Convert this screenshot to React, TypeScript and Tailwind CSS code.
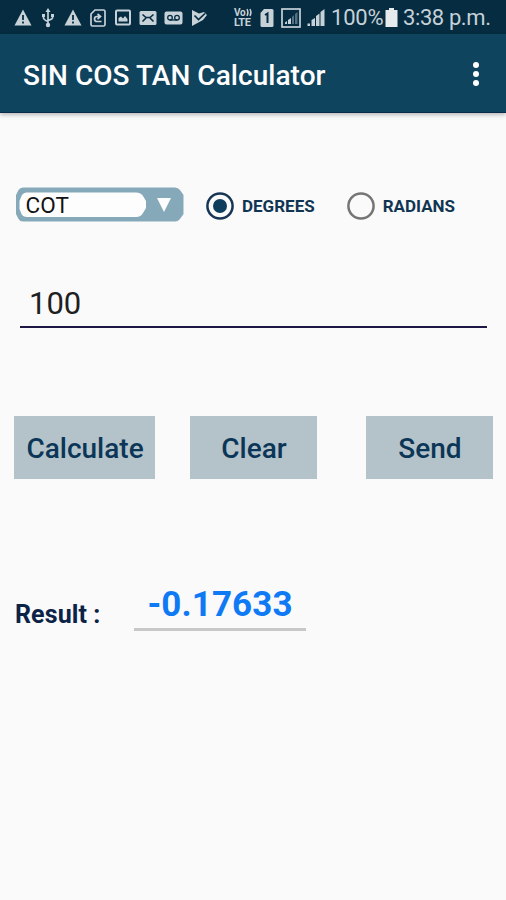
import React, { useState } from "react";

const ANGLE_UNITS = ["DEGREES", "RADIANS"];

export default function App() {
  const [unit, setUnit] = useState("DEGREES");
  const [value, setValue] = useState("100");

  return (
    <div className="flex h-[900px] w-[506px] flex-col overflow-hidden bg-[#fafafa] font-['Roboto',sans-serif]">
      <StatusBar />
      <Header />

      <main className="flex flex-1 flex-col pt-[74px]">
        {/* Function select and angle unit */}
        <div className="flex h-[36px] items-center pl-[15px]">
          <FunctionSelect />
          <div className="ml-[22px] flex gap-[32px]">
            {ANGLE_UNITS.map((name) => (
              <UnitRadio key={name} label={name} checked={unit === name} onClick={() => setUnit(name)} />
            ))}
          </div>
        </div>

        <div className="ml-[20px] mr-[19px] mt-[56px] flex h-[49px] flex-col justify-end border-b-[2px] border-[#1d1745]">
          <input
            value={value}
            onChange={(e) => setValue(e.target.value)}
            className="h-[48px] w-full bg-transparent pl-[9px] pt-[2px] text-[31px] text-[#1f1f1f] outline-none"
          />
        </div>

        <div className="mt-[88px] flex pl-[14px]">
          <ActionButton className="w-[141px]">Calculate</ActionButton>
          <ActionButton className="ml-[35px] w-[127px]">Clear</ActionButton>
          <ActionButton className="ml-[49px] w-[127px]">Send</ActionButton>
        </div>

        <div className="mt-[101px] flex pl-[15px]">
          <span className="w-[119px] pt-[20px] text-[25px] font-bold leading-[30px] tracking-[0.1px] text-[#0b2347]">
            Result :
          </span>
          <div className="h-[51px] w-[172px] border-b-[3px] border-[#c8c8c8] text-center text-[35px] font-bold leading-[49px] tracking-[0.1px] text-[#107af5]">
            -0.17633
          </div>
        </div>
      </main>
    </div>
  );
}

function Header() {
  return (
    <header className="flex h-[79px] shrink-0 items-center justify-between border-b border-[#0a2c49] bg-[#0f445f] pl-[23px] pr-[27px] pt-[2px] shadow-[0_2px_4px_rgba(0,0,0,0.25)]">
      <h1 className="whitespace-nowrap pt-[3px] text-[28px] font-medium tracking-[0.05px] text-white">
        SIN COS TAN Calculator
      </h1>
      <button className="flex flex-col gap-[3px]" aria-label="More options">
        <span className="h-[6px] w-[6px] rounded-full bg-white" />
        <span className="h-[6px] w-[6px] rounded-full bg-white" />
        <span className="h-[6px] w-[6px] rounded-full bg-white" />
      </button>
    </header>
  );
}

function FunctionSelect() {
  return (
    <svg width="169" height="36" viewBox="0 0 169 36" className="block">
      <path d="M8 .5H160Q163 .5 165 3L168.500 8V27L165 32Q163 34.500 160 34.500H8Q5 34.500 3.500 32L1 27V8L3.500 3Q5 .5 8 .5Z" fill="#86a9b9" />
      <path d="M12 5.500H121Q126 5.500 128 9L131 14V21L128 26Q126 30 121 30H12Q8 30 6.500 27L4.500 22V14L6.500 9Q8 5.500 12 5.500Z" fill="#fdfdfd" />
      <path d="M142 11H156L149 25Z" fill="#fdfdfd" />
      <text x="10.500" y="26" fontSize="22.500" fill="#111" textLength="43.500">COT</text>
    </svg>
  );
}

function UnitRadio({ label, checked, onClick }: { label: string; checked: boolean; onClick: () => void }) {
  return (
    <button onClick={onClick} className="flex items-center gap-[8px] pt-[2px]">
      <svg width="28" height="28" viewBox="0 0 28 28">
        <circle cx="14" cy="14" r="12.600" fill="none" stroke={checked ? "#173655" : "#757575"} strokeWidth="2.500" />
        {checked && <circle cx="14" cy="14" r="7" fill="#0f3e5c" />}
      </svg>
      <span className="pt-[2px] text-[17px] font-bold text-[#103553]">{label}</span>
    </button>
  );
}

function ActionButton({ className, children }: { className: string; children: React.ReactNode }) {
  return (
    <button className={`h-[63px] bg-[#b4c3ca] pl-[1px] pt-[3px] text-[28px] font-medium text-[#0c3657] ${className}`}>
      {children}
    </button>
  );
}

function StatusBar() {
  return (
    <div className="flex h-[34px] shrink-0 items-center bg-[#052c40] pl-[14px] pt-px text-[#c6d1d8]">
      <WarningIcon />
      <UsbIcon />
      <WarningIcon />
      <svg width="18" height="20" viewBox="0 0 18 20" className="ml-[7px]" fill="none" stroke="currentColor" strokeWidth="1.700">
        <path d="M6 2H14.500Q16 2 16 3.500V16.500Q16 18 14.500 18H3.500Q2 18 2 16.500V6Z" />
        <path d="M12.500 13.500H8Q5.500 13.500 5.500 11T8 8.500H11M8.500 6L11.500 8.500L8.500 11" />
      </svg>
      <svg width="18" height="20" viewBox="0 0 18 20" className="ml-[7px]" fill="none" stroke="currentColor" strokeWidth="2">
        <rect x="2" y="2.500" width="14" height="14" rx="1" />
        <path d="M4.500 13.500V10L7 8.500L9 10.500L11 8L13.500 11V13.500Z" fill="currentColor" stroke="none" />
      </svg>
      <svg width="18" height="16" viewBox="0 0 18 16" className="ml-[7px]">
        <rect x=".5" y="1" width="17" height="14" rx="1.500" fill="currentColor" />
        <path d="M3.500 4.500L7 7.500H11L14.500 4.500M3.500 11.500L7 8M14.500 11.500L11 8" fill="none" stroke="#052c40" strokeWidth="1.600" />
      </svg>
      <svg width="19" height="16" viewBox="0 0 19 16" className="ml-[7px]">
        <rect x=".5" y="1.500" width="18" height="13" rx="2" fill="currentColor" />
        <g fill="none" stroke="#052c40" strokeWidth="1.300">
          <circle cx="6" cy="7.700" r="2.300" />
          <circle cx="13" cy="7.700" r="2.300" />
          <path d="M6 10H13" />
        </g>
      </svg>
      <svg width="17" height="18" viewBox="0 0 17 18" className="ml-[8px]">
        <path d="M1 1L8 4.500L13 3L16 6L12 11L1 17Z" fill="currentColor" />
        <path d="M3.500 6.500L7.500 10.500L14 4.500" fill="none" stroke="#052c40" strokeWidth="1.700" />
      </svg>
      <div className="ml-[26px] flex w-[19px] flex-col font-bold">
        <span className="flex h-[9px] items-center whitespace-nowrap text-[10px] leading-[9px] tracking-[-0.2px]">
          Vo
          <svg width="7" height="9" viewBox="0 0 7 9" fill="none" stroke="currentColor" strokeWidth="1.400">
            <path d="M1 1Q3 4.500 1 8M4 1Q6 4.500 4 8" />
          </svg>
        </span>
        <span className="h-[10px] whitespace-nowrap text-[11px] leading-[11px] tracking-[-0.4px]">LTE</span>
      </div>
      <svg width="14" height="18" viewBox="0 0 14 18" className="ml-[7px]">
        <path d="M4 0H12Q13.500 0 13.500 1.500V16.500Q13.500 18 12 18H2Q.5 18 .5 16.500V4Z" fill="currentColor" />
        <path d="M5 6L7.500 4.500V14" fill="none" stroke="#052c40" strokeWidth="2" />
      </svg>
      <svg width="20" height="20" viewBox="0 0 20 20" className="ml-[7px]">
        <rect x="1" y="1" width="18" height="18" fill="none" stroke="currentColor" strokeWidth="1.700" />
        <path d="M4 16V14.500L6 13V16ZM7 16V12L10 10V16Z" fill="currentColor" />
        <path d="M11 16V9L13 7V16ZM14 16V6L16.500 4V16Z" fill="#537283" />
      </svg>
      <svg width="19" height="19" viewBox="0 0 19 19" className="ml-[6px]" fill="currentColor">
        <path d="M.5 18V15.500H3V18ZM4.500 18V12L8 10V18ZM9 18V8L12.500 5.500V18ZM13.500 18V4L17.500 1V18Z" />
      </svg>
      <span className="ml-[5px] w-[53px] whitespace-nowrap text-[22px] leading-[28px] tracking-[-0.2px]">100%</span>
      <svg width="13" height="19" viewBox="0 0 13 19" className="ml-[1px]" fill="#e6ebee">
        <path d="M4 0H9V2H12.500V19H.5V2H4Z" />
      </svg>
      <span className="ml-[5px] whitespace-nowrap text-[22px] leading-[28px] tracking-[-0.4px]">3:38 p.m.</span>
    </div>
  );
}

function WarningIcon() {
  return (
    <svg width="18" height="17" viewBox="0 0 18 17" className="shrink-0">
      <path d="M9 .5L17.500 16.500H.5Z" fill="currentColor" />
      <path d="M9 6V11M9 12.500V14.500" stroke="#052c40" strokeWidth="1.800" />
    </svg>
  );
}

function UsbIcon() {
  return (
    <svg width="14" height="20" viewBox="0 0 14 20" className="ml-[9px] mr-[9px] shrink-0" fill="none" stroke="currentColor" strokeWidth="1.700">
      <path d="M7 3V17M2.500 8V10Q2.500 11.500 7 13.500M11.500 8V10Q11.500 11 7 12.500" />
      <path d="M7 0L9.500 4H4.500ZM1 6H4V9H1ZM10 6H13V9H10Z" fill="currentColor" stroke="none" />
      <circle cx="7" cy="17" r="2.200" fill="currentColor" stroke="none" />
    </svg>
  );
}
